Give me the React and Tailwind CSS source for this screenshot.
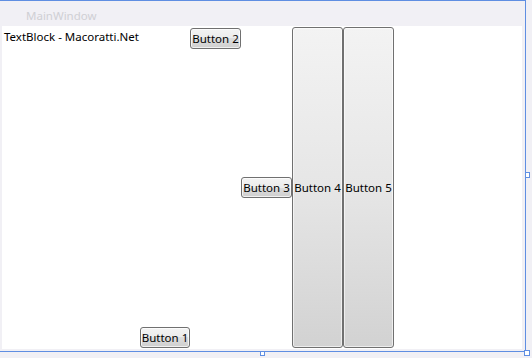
export default function App() {
  const btn =
    "flex items-center justify-center rounded-[3px] border border-[#707070] bg-[linear-gradient(to_bottom,#f3f3f3_0%,#ebebeb_50%,#dddddd_50%,#cfcfcf_100%)] shadow-[inset_0_0_0_1px_rgba(255,255,255,0.7)] text-[11.5px] leading-[14px] text-black whitespace-nowrap";
  const tall =
    "flex items-center justify-center rounded-[3px] border border-[#707070] bg-[linear-gradient(to_bottom,#f3f3f3_0%,#e6e6e6_50%,#d2d2d2_100%)] shadow-[inset_0_0_0_1px_rgba(255,255,255,0.6)] text-[11.5px] leading-[14px] text-black whitespace-nowrap";
  return (
    <div className="relative w-[532px] h-[358px] bg-[#f1f0f5] font-['Noto_Sans','Open_Sans',sans-serif] overflow-hidden">
      <div className="w-[526px] h-[352px] border-t border-r border-b border-[#5f8ee2] flex flex-col">
        <div className="h-[25px] pl-[26px] pt-[8px] text-[11.5px] leading-[14px] text-[#cfcfd4]">
          MainWindow
        </div>
        <div className="ml-[2px] w-[520px] h-[323px] bg-white flex flex-row items-stretch py-[1px]">
          <div className="self-start ml-[2px] w-[136px] pt-[2px] text-[11.5px] leading-[15px] text-black whitespace-nowrap">
            TextBlock - Macoratti.Net
          </div>
          <div className={`${btn} self-end w-[50px] h-[21px]`}>Button 1</div>
          <div className={`${btn} self-start w-[51px] h-[21px] mt-[1px]`}>Button 2</div>
          <div className={`${btn} self-center w-[51px] h-[21px]`}>Button 3</div>
          <div className={`${tall} w-[51px]`}>Button 4</div>
          <div className={`${tall} w-[51px]`}>Button 5</div>
        </div>
      </div>
      <div className="absolute left-[525px] top-[172px] w-[5px] h-[6px] border border-[#5f8ee2] bg-white" />
      <div className="absolute left-[260px] top-[351px] w-[5px] h-[5px] border border-[#5f8ee2] bg-white" />
      <div className="absolute left-[524px] top-[350px] w-[6px] h-[6px] border border-[#5f8ee2] bg-white" />
    </div>
  );
}
